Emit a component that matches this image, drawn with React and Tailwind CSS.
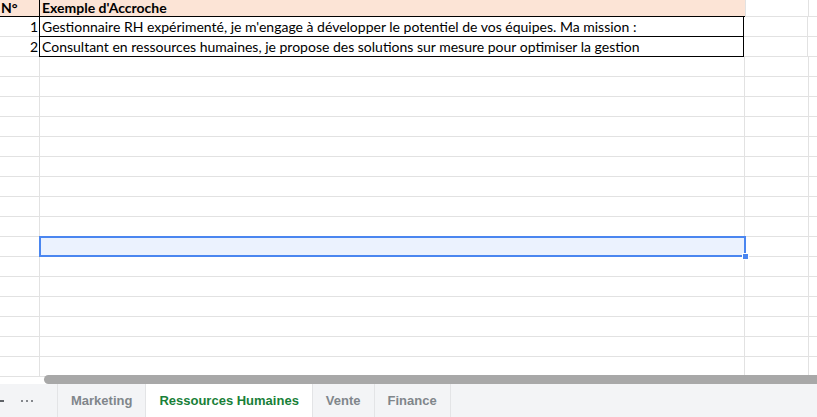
import React from "react"

const cellFont = { fontFamily: "Lato, 'Open Sans', sans-serif" }

const rows = [
  "Gestionnaire RH expérimenté, je m'engage à développer le potentiel de vos équipes. Ma mission :",
  "Consultant en ressources humaines, je propose des solutions sur mesure pour optimiser la gestion",
]

const tabs = ["Marketing", "Ressources Humaines", "Vente", "Finance"]

function EmptyRow({ selected }) {
  return (
    <div className="flex h-[20px] shrink-0">
      <div className="w-[40px] border-r border-b border-[#e2e2e2]" />
      {selected ? (
        <div className="relative w-[705px] border-b border-r border-[#e2e2e2]">
          <div className="absolute -left-[1px] -top-[1px] w-[707px] h-[21px] border-2 border-[#4a86f0] bg-[#ebf2fe]" />
          <div className="absolute -right-[5px] bottom-[-4px] w-[7px] h-[7px] bg-[#4a86f0] border border-white" />
        </div>
      ) : (
        <div className="w-[705px] border-r border-b border-[#e2e2e2]" />
      )}
      <div className="w-[64px] border-r border-b border-[#e2e2e2]" />
      <div className="flex-1 border-b border-[#e2e2e2]" />
    </div>
  )
}

export default function App() {
  return (
    <div className="w-[817px] h-[417px] overflow-hidden bg-white flex flex-col">
      {/* grid */}
      <div className="h-[376px] flex flex-col overflow-hidden text-[14px] text-black" style={cellFont}>
        {/* header row */}
        <div className="flex h-[17px] shrink-0">
          <div className="w-[40px] bg-[#fce4d6] border-r border-b border-black flex items-end pl-[1px] font-bold leading-[16px]">
            N°
          </div>
          <div className="w-[705px] bg-[#fce4d6] border-b border-black flex items-end pl-[2px] font-bold leading-[16px]">
            Exemple d'Accroche
          </div>
          <div className="w-[64px] border-l border-r border-b border-[#e2e2e2]" />
          <div className="flex-1 border-b border-[#e2e2e2]" />
        </div>
        {rows.map((t, i) => (
          <div key={i} className="flex h-[20px] shrink-0">
            <div className="w-[40px] border-r border-b border-[#e2e2e2] flex items-end justify-end pr-[1px] leading-[19px]">
              {i + 1}
            </div>
            <div className="w-[705px] border-x border-b border-black -ml-[1px] flex items-end pl-[2px] leading-[19px] whitespace-nowrap">
              {t}
            </div>
            <div className="w-[64px] border-r border-b border-[#e2e2e2]" />
            <div className="flex-1 border-b border-[#e2e2e2]" />
          </div>
        ))}
        {Array.from({ length: 16 }).map((_, i) => (
          <EmptyRow key={i} selected={i === 9} />
        ))}
      </div>

      {/* horizontal scrollbar */}
      <div className="h-[8px] flex border-t border-[#e2e2e2] bg-white">
        <div className="w-[44px]" />
        <div className="flex-1 -mt-[2px] h-[9px] bg-[#a8a8a8] rounded-l-full" />
      </div>

      {/* sheet tabs */}
      <div
        className="flex-1 flex bg-[#f3f4f6] text-[13px] font-bold"
        style={{ fontFamily: "'Liberation Sans', Arial, sans-serif" }}
      >
        <div className="w-[57px] flex items-center">
          <div className="w-[4px] h-[2px] bg-[#5f6368] ml-0" />
          <div className="ml-[17px] flex gap-[3px]">
            <span className="w-[2px] h-[2px] rounded-full bg-[#5f6368]" />
            <span className="w-[2px] h-[2px] rounded-full bg-[#5f6368]" />
            <span className="w-[2px] h-[2px] rounded-full bg-[#5f6368]" />
          </div>
        </div>
        {tabs.map((t) => {
          const active = t === "Ressources Humaines"
          return (
            <div
              key={t}
              className={
                "flex items-center px-[13px] border-l border-[#e3e4e6] " +
                (active ? "bg-white text-[#188038]" : "text-[#80868b]")
              }
            >
              {t}
            </div>
          )
        })}
        <div className="border-l border-[#e3e4e6]" />
      </div>
    </div>
  )
}
